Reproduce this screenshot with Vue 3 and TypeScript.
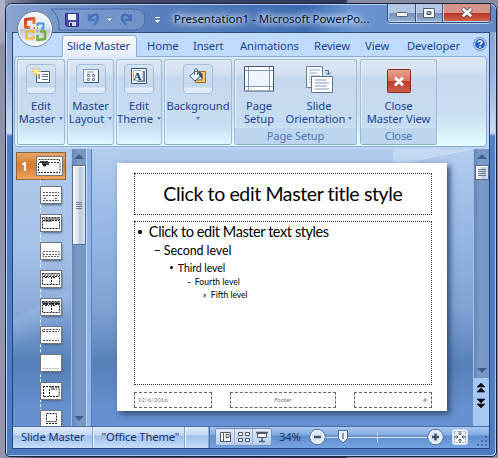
<script setup lang="ts">
interface Tab { label: string; width: number }
const tabs: Tab[] = [
  { label: 'Home', width: 46 },
  { label: 'Insert', width: 47 },
  { label: 'Animations', width: 74 },
  { label: 'Review', width: 51 },
  { label: 'View', width: 42 },
  { label: 'Developer', width: 68 },
]
interface Tool { icon: string; lines: string[]; width: number }
const tools: Tool[] = [
  { icon: 'master', lines: ['Edit', 'Master'], width: 48 },
  { icon: 'layout', lines: ['Master', 'Layout'], width: 47 },
  { icon: 'theme', lines: ['Edit', 'Theme'], width: 46 },
  { icon: 'fill', lines: ['Background', ''], width: 68 },
]
const thumbs: string[] = ['title', 'text', 'section', 'two', 'compare', 'head', 'blank', 'caption', 'picture']
</script>

<template>
  <div class="desktop">
    <div class="window">
      <header class="titlebar">
        <div class="quick">
          <svg width="95" height="24" viewBox="0 0 95 24">
            <path d="M0 1H83Q94 1 94 11Q94 22 83 22H8Q9 8 0 1Z" fill="#7c9cd0" fill-opacity=".62" stroke="#4568a8" />
            <g transform="translate(14 5)">
              <path d="M.5.5H13.5V13.5H2L.5 12Z" fill="#4548ad" stroke="#30338a" />
              <path d="M3 1H11V7H3Z" fill="#f0f4ff" /><path d="M4 9H11V13H4Z" fill="#d5d9f0" /><path d="M5 10H7V13H5Z" fill="#252861" />
            </g>
            <path d="M38 6V12H44M38.500 11C41 6 46 5 47 9C47.500 12 45 14 43 17" fill="none" stroke="#4672c2" stroke-width="2.400" />
            <path d="M55 10H62L58.500 13.500Z" fill="#dfe9fb" stroke="#3e5c95" stroke-width=".5" />
            <path d="M80 6V12H74M79.500 11C77 6 72 5 71 9C70.500 12 73 14 75 17" fill="none" stroke="#416dba" stroke-width="2.200" />
          </svg>
          <svg class="more" width="7" height="8" viewBox="0 0 7 8"><path d="M1 1.500H6" stroke="#fff" /><path d="M1 4H6L3.500 7Z" fill="#fff" /></svg>
        </div>
        <div class="caption">Presentation1 - Microsoft PowerPo...</div>
        <div class="controls">
          <span class="control"><svg width="14" height="12"><rect x="1.500" y="5.500" width="11" height="4" rx="1" fill="#fff" stroke="#555f73" /></svg></span>
          <span class="control middle"><svg width="14" height="12"><path d="M1.500 1.500H12.500V10.500H1.500ZM5 4.500V7.500H9V4.500Z" fill="#fff" fill-rule="evenodd" stroke="#555f73" /></svg></span>
          <span class="control red"><svg width="14" height="12"><path d="M2.500 1.500L11.500 9.500M11.500 1.500L2.500 9.500" stroke="#555" stroke-width="4.300" /><path d="M2.800 1.700L11.200 9.300M11.200 1.700L2.800 9.300" stroke="#fff" stroke-width="2.600" /></svg></span>
        </div>
      </header>
      <svg class="orb" width="38" height="38" viewBox="0 0 38 38">
        <defs>
          <linearGradient id="orbFill" x1="0" y1="0" x2="0" y2="1"><stop offset="0" stop-color="#fafbfd" /><stop offset=".48" stop-color="#dbe1ec" /><stop offset=".53" stop-color="#bdc8da" /><stop offset="1" stop-color="#fff" /></linearGradient>
          <linearGradient id="logoRed" x1="0" y1="0" x2="1" y2="1"><stop stop-color="#c8321a" /><stop offset="1" stop-color="#f58a2c" /></linearGradient>
        </defs>
        <circle cx="19" cy="19" r="17.500" fill="url(#orbFill)" stroke="#6d7f9d" /><circle cx="19" cy="19" r="16.300" fill="none" stroke="#fff" stroke-opacity=".8" />
        <g fill="none" stroke-width="2" stroke-linejoin="round">
          <path d="M14 17.500H9.500V9.500L18 8.500V14" stroke="url(#logoRed)" stroke-width="2.800" />
          <path d="M21.500 16V13.500H27.500V18.500H25" stroke="#4a96d6" />
          <path d="M13 21.500H10.500V28.500H17.500V26M14 21.500H17.500V23" stroke="#f3b62c" />
          <path d="M24 21.500H29V29L21.500 30V25" stroke="#6fae3f" stroke-width="2.600" />
          <path d="M17.500 18H19M21 18H22M21 21.500H22" stroke="#d98332" />
        </g>
      </svg>

      <div class="client">
        <nav class="tabs">
          <span class="tab active">Slide Master</span>
          <span v-for="tab in tabs" :key="tab.label" class="tab" :style="{ width: tab.width + 'px' }">{{ tab.label }}</span>
          <svg class="help" width="14" height="14" viewBox="0 0 14 14"><circle cx="7" cy="7" r="6.300" fill="#dceaff" stroke="#5580bc" /><circle cx="7" cy="7" r="4.900" fill="#245dc6" /><path d="M5 5.500C5 3.400 9 3.400 9 5.500C9 6.800 7 6.500 7 8.200M7 9.300V11" fill="none" stroke="#fff" stroke-width="1.400" /></svg>
        </nav>

        <section class="ribbon">
          <div v-for="tool in tools" :key="tool.icon" class="group" :style="{ width: tool.width + 'px' }">
            <div class="tile">
              <svg width="20" height="18" viewBox="0 0 20 18">
                <g v-if="tool.icon === 'master'">
                  <path d="M5.500 4.500H18.500V15.500H5.500Z" fill="#fff" stroke="#48617d" /><path d="M11 7.500H17M11 9.500H17M11 12.500H17" stroke="#5f7692" /><path d="M7 7H9V12H7Z" fill="#879cb2" />
                  <path d="M5 1V9M1 4.500H10M2 1.500L8.500 8M8.500 1.500L2 8" stroke="#e7b52b" /><circle cx="5" cy="4.500" r="2.300" fill="#fff18f" />
                </g>
                <g v-else-if="tool.icon === 'layout'">
                  <path d="M2.500 2.500H17.500V15.500H2.500Z" fill="#f4f7fc" stroke="#809ab9" /><path d="M17.500 3V15.500H3" fill="none" stroke="#395474" />
                  <path d="M6 5H13" stroke="#8195ad" /><path d="M6.500 7.500H8.500V9.500H6.500ZM11.500 7.500H13.500V9.500H11.500ZM6.500 11.500H8.500V13.500H6.500ZM11.500 11.500H13.500V13.500H11.500Z" fill="#fff" stroke="#6d819e" />
                </g>
                <g v-else-if="tool.icon === 'theme'">
                  <path d="M2.500 1.500H17.500V16.500H2.500Z" fill="#fff" stroke="#355474" /><path d="M14 4H16V15H8V13H14Z" fill="#547695" /><path d="M4.500 3.500H12L14 5.500V13.500H4.500Z" fill="#f0f4f8" stroke="#9bb0c5" /><text x="4.500" y="12.500" class="letter">A</text>
                </g>
                <g v-else>
                  <path d="M10 4.500H17.500V15.500H7.500V13H14V7H10Z" fill="#f3cb78" stroke="#9b6d22" /><path d="M1.500 9L8 4L13 8.500L7 14Z" fill="#edf3fa" stroke="#4b607a" /><path d="M6.500 8V3Q7.500 .5 9.500 2.500V8" fill="none" stroke="#54677e" /><path d="M10.500 4.500Q15.500 5 14.500 12L11.500 9Z" fill="#365276" />
                </g>
              </svg>
            </div>
            <div class="words"><div v-for="(line, i) in tool.lines" :key="i">{{ line }}<i v-if="i === 1" class="arrow" :class="{ alone: !line }"></i></div></div>
          </div>
          <div class="group named setup">
            <div class="pair">
              <div class="command page">
                <svg width="32" height="32" viewBox="0 0 32 32"><path d="M1.500 2.500H30.500V27H1.500Z" fill="#fff" stroke="#3f5875" /><path d="M5.500 3V26.500M26.500 3V26.500M2 6.500H30M2 22.500H30" stroke="#7c9ab9" /><path d="M6 7H26V22H6Z" fill="#f0f4fc" /></svg>
                <div>Page</div><div>Setup</div>
              </div>
              <div class="command slideturn">
                <svg width="32" height="32" viewBox="0 0 32 32"><path d="M3.500 2.500H19.500V23.500H3.500Z" fill="#fff" stroke="#667f9b" /><path d="M6 6H17M6 9H14M6 12H17M6 15H15M6 18H17" stroke="#93acc7" /><path d="M8.500 12.500H29.500V28.500H8.500Z" fill="#fff" stroke="#5d7590" /><path d="M12 16H23M12 19H26M12 22H24M12 25H26" stroke="#7f9abd" /><path d="M22 6.500H25.500V10M23 8.500L25.500 11L28 8.500" fill="none" stroke="#4f6681" /></svg>
                <div>Slide</div><div>Orientation<i class="arrow"></i></div>
              </div>
            </div>
            <footer>Page Setup</footer>
          </div>
          <div class="group named closing">
            <div class="command"><svg width="32" height="32" viewBox="0 0 32 32"><defs><linearGradient id="closeRed" x2="0" y2="1"><stop stop-color="#e6a48d" /><stop offset=".48" stop-color="#d47661" /><stop offset=".53" stop-color="#bd3c29" /><stop offset="1" stop-color="#ce624c" /></linearGradient></defs><rect x="4.500" y="5.500" width="23" height="23" rx="1" fill="url(#closeRed)" stroke="#8c2720" /><path d="M12 13.500L20 21.500M20 13.500L12 21.500" stroke="#fff" stroke-width="2.800" /></svg><div>Close</div><div>Master View</div></div>
            <footer>Close</footer>
          </div>
        </section>

        <main class="workspace">
          <aside class="outline">
            <div class="selected"><b>1</b><svg width="25" height="18" viewBox="0 0 25 18"><rect width="25" height="18" fill="#fff" /><g fill="none" stroke="#333" stroke-dasharray="2 1"><path d="M1.500 2.500H22.500V5.500M2 5.500H23M1.500 6V15.500H23V6" /></g><path d="M3 5H11M5 7H12M6 8.500H9" stroke="#111" stroke-width="1.600" /></svg></div>
            <div class="branch">
              <svg v-for="kind in thumbs" :key="kind" class="thumb" width="20" height="16" viewBox="0 0 20 16">
                <rect width="20" height="16" fill="#fff" />
                <g fill="none" stroke="#222" stroke-dasharray="2 1">
                  <g v-if="kind === 'title'"><path d="M2 5.500H18M2 8.500H18M3 11.500H6M14 11.500H17M2 13.500H18" stroke="#555" /></g>
                  <g v-else-if="kind === 'text'"><path d="M1.500 2.500H18.500V13.500H1.500ZM2 5.500H18" /><path d="M3 4H18M4 6H11" stroke-dasharray="none" /></g>
                  <g v-else-if="kind === 'section'"><path d="M2 8.500H18V13.500H2ZM2 11.500H18" stroke="#666" /></g>
                  <g v-else-if="kind === 'two' || kind === 'compare'"><path d="M1.500 2.500H18.500V13.500H1.500ZM2 5.500H18M10.500 6V13" /><path d="M3 4H17M4 6.500H8M12 6.500H15" /><path v-if="kind === 'compare'" d="M2 4.500H18" stroke-width="2" stroke-dasharray="5 1" /></g>
                  <g v-else-if="kind === 'head'"><path d="M1.500 4.500V2.500H18.500V4.500M2 4.500H18M2 13.500H18" stroke="#555" /></g>
                  <g v-else-if="kind === 'blank'"><path d="M2 13.500H18" stroke="#aaa" /></g>
                  <g v-else-if="kind === 'caption'"><path d="M2.500 3V13.500M2 3.500H7M8.500 6V13M8 3.500H18V13.500H2" /><path d="M9 4H18M10 6H16" stroke-dasharray="4 1" /></g>
                  <g v-else-if="kind === 'picture'"><path d="M5.500 2.500H15.500V10.500H5.500ZM5 12.500H16" /></g>
                </g>
              </svg>
            </div>
          </aside>
          <div class="scroll leftscroll"><i class="up"></i><div class="grip"><i class="lines"></i></div><i class="down"></i></div>
          <div class="splitter"></div>
          <div class="stage">
            <article class="slide">
              <h1><span>Click to edit Master title style</span></h1>
              <div class="content">
                <p class="l1"><i class="dot"></i><span>Click to edit Master text styles</span></p>
                <p class="l2"><i>–</i><span>Second level</span></p>
                <p class="l3"><i class="dot"></i><span>Third level</span></p>
                <p class="l4"><i>–</i><span>Fourth level</span></p>
                <p class="l5"><i>»</i><span>Fifth level</span></p>
              </div>
              <div class="footers"><span>12/6/2016</span><span>Footer</span><span>‹#›</span></div>
            </article>
          </div>
          <div class="rightside">
            <div class="scroll"><i class="up"></i><div class="grip"><i class="lines"></i></div><i class="down"></i></div>
            <svg width="16" height="48" viewBox="0 0 16 48"><path d="M8 5L12 9H4ZM8 10L12 14H4ZM4 21H12L8 25ZM4 26H12L8 30Z" fill="#080d17" stroke="#080d17" stroke-width=".6" /></svg>
          </div>
        </main>

        <footer class="status">
          <span class="mode">Slide Master</span><span class="theme">"Office Theme"</span><span class="empty"></span>
          <div class="zoombar">
            <div class="views">
              <svg width="18" height="17"><path d="M4.500 3.500H14.500V12.500H4.500ZM7.500 4V12M10 5.500H13V8.500H10Z" fill="#fff" stroke="#4e5969" /></svg>
              <svg width="18" height="17"><path d="M3.500 3.500H7.500V6.500H3.500ZM10.500 3.500H14.500V6.500H10.500ZM3.500 9.500H7.500V12.500H3.500ZM10.500 9.500H14.500V12.500H10.500Z" fill="#fff" stroke="#4e5969" /></svg>
              <svg width="18" height="17"><path d="M4.500 4.500H13.500V8.500H4.500Z" fill="#fff" stroke="#4e5969" /><path d="M3 3.500H15M9 9V12M6 12.500H12" stroke="#4e5969" stroke-width="1.400" /></svg>
            </div>
            <span class="percent">34%</span>
            <svg class="slider" width="135" height="20" viewBox="0 0 135 20">
              <path d="M16 10.500H118M68.500 6V15" stroke="#d5e5fa" /><path d="M16 9.500H118" stroke="#6c93c9" />
              <g fill="#dce8f7" stroke="#4c6b98"><circle cx="8.500" cy="10" r="7.700" /><circle cx="126.500" cy="10" r="7.700" /></g>
              <g fill="none" stroke="#fff"><circle cx="8.500" cy="10" r="6.500" /><circle cx="126.500" cy="10" r="6.500" /></g>
              <path d="M5 10H12M123 10H130M126.500 6.500V13.500" stroke="#3e526e" stroke-width="2.400" />
              <path d="M29.500 3.500H38.500V11.500L34 16L29.500 11.500Z" fill="#edf2fb" stroke="#526d94" /><path d="M34 6V12" stroke="#7f9bc1" stroke-width="2" />
            </svg>
            <svg class="fit" width="16" height="16"><rect x=".5" y=".5" width="15" height="15" rx="2" fill="#edf2f9" stroke="#d5e3f7" /><path d="M2.500 2.500H13.500V13.500H2.500Z" fill="none" stroke="#727a87" stroke-dasharray="1 2" /><path d="M8 2V6M6.500 4.500L8 6L9.500 4.500M8 14V10M6.500 11.500L8 10L9.500 11.500M2 8H6M4.500 6.500L6 8L4.500 9.500M14 8H10M11.500 6.500L10 8L11.500 9.500" fill="none" stroke="#4b5460" /></svg>
            <svg class="resize" width="12" height="12"><path d="M8 1H10V3H8ZM4 5H6V7H4ZM8 5H10V7H8ZM0 9H2V11H0ZM4 9H6V11H4ZM8 9H10V11H8Z" fill="#416ca9" /></svg>
          </div>
        </footer>
      </div>
    </div>
  </div>
</template>

<style>
body { overflow: hidden; }
</style>

<style scoped>
* { box-sizing: border-box; }
svg { display: block; flex: none; }
.desktop { width: 498px; height: 458px; padding: 3px 0 1px 5px; background: linear-gradient(#b2b4c6,#a2a5ba 42px,#8d91a8 46px,#9396ac) 0 0/5px 458px no-repeat, linear-gradient(90deg,#9699ac,#4a4f6b 40px,#30375b 346px,#888ca0 348px); font: 11px/13px "Noto Sans", sans-serif; color: #1b458f; }
.window { position: relative; width: 492px; height: 454px; border: 1px solid #14213e; border-radius: 7px 7px 5px 5px; background: linear-gradient(#7f9bc9,#9eb6dd 80px,#ccdcf2 129px,#517fc5 132px,#4e7bc1); box-shadow: inset 1px 1px #bdd7f8,inset -1px -1px #a9cdf4; }
.titlebar { height: 28px; display: flex; background: linear-gradient(90deg,#89a4cf,#5d80bc 140px,#3b68b2 300px,#6992cf 345px,#6589c5 100%); border-radius: 6px 6px 0 0; box-shadow: inset 0 1px #b6d1f4; }
.quick { display: flex; width: 163px; padding: 4px 0 0 45px; }
.more { margin: 8px 0 0 8px; }
.caption { width: 200px; margin-left: 5px; padding-top: 8px; white-space: nowrap; color: #0a101c; font-size: 11.500px; letter-spacing: -.02px; text-shadow: 0 0 4px #dfeaff,0 0 7px #dfeaff,0 0 10px #c4d9ff,0 0 12px #a9c6f5; }
.controls { margin-left: 13px; display: flex; height: 19px; width: 104px; border: 1px solid #344a70; border-top: 0; border-radius: 0 0 4px 4px; box-shadow: 0 1px #bbd3f3; overflow: hidden; }
.control { display: flex; width: 28px; justify-content: center; padding-top: 3px; background: linear-gradient(#b3c7e2 48%,#7590ba 52%,#98b3d7); border-right: 1px solid #3b5277; box-shadow: inset 1px -1px #c0d5ee; }
.middle { width: 27px; }
.red { width: 47px; background: linear-gradient(#d69388 48%,#b83524 52%,#d26a52); border: 0; }
.orb { position: absolute; left: 10px; top: 6px; z-index: 3; }
.client { margin: 0 0 0 6px; width: 478px; height: 417px; border: 1px solid #24467e; border-top: 1px solid #304c7e; background: #bdd5f5; }
.tabs { height: 23px; display: flex; padding: 2px 0 0 49px; background: #bfdbff; }
.tab { padding-top: 4px; font-size: 11.200px; letter-spacing: -.08px; white-space: nowrap; }
.active { width: 75px; height: 22px; margin-right: 10px; padding: 3px 0 0 4px; border: 1px solid #8eaedc; border-bottom: 0; border-radius: 4px 4px 0 0; background: linear-gradient(#f7fbff,#e3edfb); box-shadow: inset 1px 1px #fff; letter-spacing: -.15px; }
.help { margin: 2px 0 0 -2px; }
.ribbon { height: 91px; margin: 0 2px 0 1px; padding: 2px 2px 3px; display: flex; gap: 2px; border: 1px solid #8aacd7; border-radius: 4px; background: linear-gradient(#dfe9f5 0,#d5e1f1 15px,#c8d9ee 17px,#cbdff3 58px,#e3ffff); }
.group { flex: none; height: 86px; border: 1px solid #9bbbdb; border-bottom-color: #81b0c8; border-radius: 3px; background: linear-gradient(#dce7f4,#d5e2f1 14px,#c6d8ed 16px,#c7dcf2 65px,#def9ff); box-shadow: inset 1px 1px #e9f2fa; text-align: center; white-space: nowrap; }
.tile { display: flex; width: 30px; height: 30px; margin: 4px auto 0; padding: 2px 5px; border: 1px solid #a4bedc; border-radius: 4px; background: linear-gradient(#d5e3f2,#c3d6ed 22px,#e0ebf7 23px); }
.tile svg { margin-left: -1px; }
.letter { font: bold 11px "Liberation Serif", serif; fill: #24435f; }
.words, .command { font-size: 11.200px; line-height: 13px; letter-spacing: -.05px; }
.words { margin-top: 5px; }
.words div, .command div { height: 13px; }
.arrow { display: inline-block; margin: 0 0 3px 4px; border: 2.500px solid transparent; border-top: 3px solid #5178ad; border-bottom: 0; }
.arrow.alone { margin-left: 0; }
.setup { width: 123px; margin-left: 0; }
.closing { width: 77px; margin-left: 1px; }
.named { display: flex; flex-direction: column; }
.pair { display: flex; }
.page { width: 48px; }
.slideturn { width: 72px; }
.command { height: 68px; padding-top: 4px; }
.command svg { margin: 0 auto 3px; }
.command .arrow { margin-left: 3px; }
.named footer { height: 16px; font-size: 11px; line-height: 15px; color: #4b75b4; background: #bed5ef; letter-spacing: -.1px; }
.workspace { height: 279px; display: flex; padding-top: 2px; overflow: hidden; }
.outline { width: 58px; padding: 3px 0 0 3px; background: linear-gradient(153deg,#ffffff1a 55%,#b7d0f259 56%,transparent 66%),linear-gradient(#aac6ea,#9abae5 100px,#7fa2d4 160px,#5580b8 215px,#6690cf 260px); }
.selected { height: 28px; width: 50px; padding: 4px 3px; display: flex; justify-content: space-between; border: 1px solid #8d653d; background: linear-gradient(#eaa86c,#d67b2c 45%,#df8944 70%,#efa65f); }
.selected b { padding: 3px 0 0 1px; color: #fff; font-size: 12px; }
.selected svg { outline: 1px solid #777; }
.branch { display: flex; flex-direction: column; gap: 12px; margin-left: 24px; padding-top: 7px; border-left: 1px dashed #edf3fc; }
.thumb { outline: 1px solid #6f7682; box-shadow: 1px 2px 2px #4e6385; }
.scroll { display: flex; flex-direction: column; align-items: center; width: 15px; height: 277px; background: linear-gradient(90deg,#6487b9,#7c9ac5 40%,#7896c3); border-left: 1px solid #a0c0ed; }
.up, .down { width: 0; border: 5px solid transparent; }
.up { margin-top: 5px; border-top: 0; border-bottom: 5px solid #415e8f; }
.down { margin: auto 0 5px; border-bottom: 0; border-top: 5px solid #415e8f; }
.grip { width: 14px; height: 80px; margin-top: 6px; padding: 36px 3px 0; border: 1px solid #5a6e8c; background: linear-gradient(90deg,#fafbfd,#d3dcea 50%,#b8c7dc 55%,#d7dfeb); box-shadow: inset 1px 1px #fff; }
.lines { display: block; height: 7px; background: repeating-linear-gradient(#6e7888 0 1px,transparent 1px 2px); }
.splitter { width: 6px; border-left: 1px solid #c1d8fa; border-right: 1px solid #5881bd; background: #90b3e9; }
.stage { width: 382px; padding: 14px 0 0 25px; background: linear-gradient(to bottom right,#e4effc59 49%,#f0f7ff80 50%,transparent 52%) 100% 0/80px 16px no-repeat,linear-gradient(#b4cdee,#a0bfe9 50px,#8fb0df 110px,#7fa1d3 160px,#5780b8 215px,#6690cf 260px); }
.slide { width: 330px; height: 248px; padding: 10px 15px 0 17px; background: #fff; color: #000; font-family: Lato, sans-serif; box-shadow: 3px 3px 6px #304c75; }
h1 { margin: 0; height: 42px; border: 1px dotted #333; font-size: 19.500px; line-height: 39px; font-weight: 400; text-align: center; letter-spacing: -.38px; white-space: nowrap; }
.content { height: 164px; margin-top: 6px; border: 1px dotted #333; }
p { margin: 0; display: flex; white-space: nowrap; }
p i { font-style: normal; }
.dot::before { content: ""; display: block; width: 4px; height: 4px; margin: 8px 0 0 1px; border-radius: 50%; background: #000; }
.l1 { font-size: 14.500px; line-height: 19px; padding-left: 2px; letter-spacing: -.42px; }
.l1 i { width: 12px; }
.l2 { font-size: 12.500px; line-height: 20px; padding-left: 19px; letter-spacing: -.1px; }
.l2 i { width: 10px; }
.l3 { font-size: 10.500px; line-height: 14px; padding-left: 34px; letter-spacing: -.05px; }
.l3 i { width: 9px; }
.l3 .dot::before { width: 3px; height: 3px; margin-top: 5px; }
.l4 { font-size: 8.500px; line-height: 14px; padding-left: 52px; letter-spacing: .07px; }
.l4 i { width: 8px; }
.l5 { font-size: 8.500px; line-height: 13px; padding-left: 68px; }
.l5 i { width: 8px; }
.footers { display: flex; justify-content: space-between; margin-top: 7px; font-size: 6px; line-height: 14px; color: #777; }
.footers span { width: 78px; height: 16px; border: 1px dashed #666; padding: 0 3px; }
.footers span:nth-child(2) { width: 106px; text-align: center; }
.footers span:last-child { text-align: right; font-size: 5px; }
.rightside { width: 16px; background: #a7c8f3; }
.rightside .scroll { width: 16px; height: 229px; }
.rightside .grip { height: 15px; width: 14px; margin-top: 6px; padding: 3px 2px; }
.status { display: flex; height: 22px; background: linear-gradient(#dfebfb,#c1d8f4 8px,#a1c0ea 9px,#c7dcfa); border-top: 1px solid #4b70a9; font-size: 11.200px; line-height: 20px; letter-spacing: -.1px; color: #17336b; white-space: nowrap; }
.status > span { border-right: 1px solid #82a5d6; box-shadow: 1px 0 #edf5ff; }
.mode { width: 80px; padding-left: 8px; }
.theme { width: 93px; padding-left: 9px; }
.empty { width: 24px; }
.zoombar { flex: 1; display: flex; padding-left: 5px; border-left: 1px solid #52769e; background: linear-gradient(#a9c8f2,#82aae2 8px,#608dcb 9px,#76a5e3); }
.views { width: 57px; height: 18px; margin-top: 1px; display: flex; border: 1px solid #7491b8; border-radius: 2px; background: linear-gradient(#e0eafa,#b8ceed); }
.views svg + svg { border-left: 1px solid #96b3da; }
.percent { margin-left: 7px; width: 30px; }
.fit { margin: 2px 0 0 8px; }
.resize { margin: 8px 0 0 9px; }
</style>
